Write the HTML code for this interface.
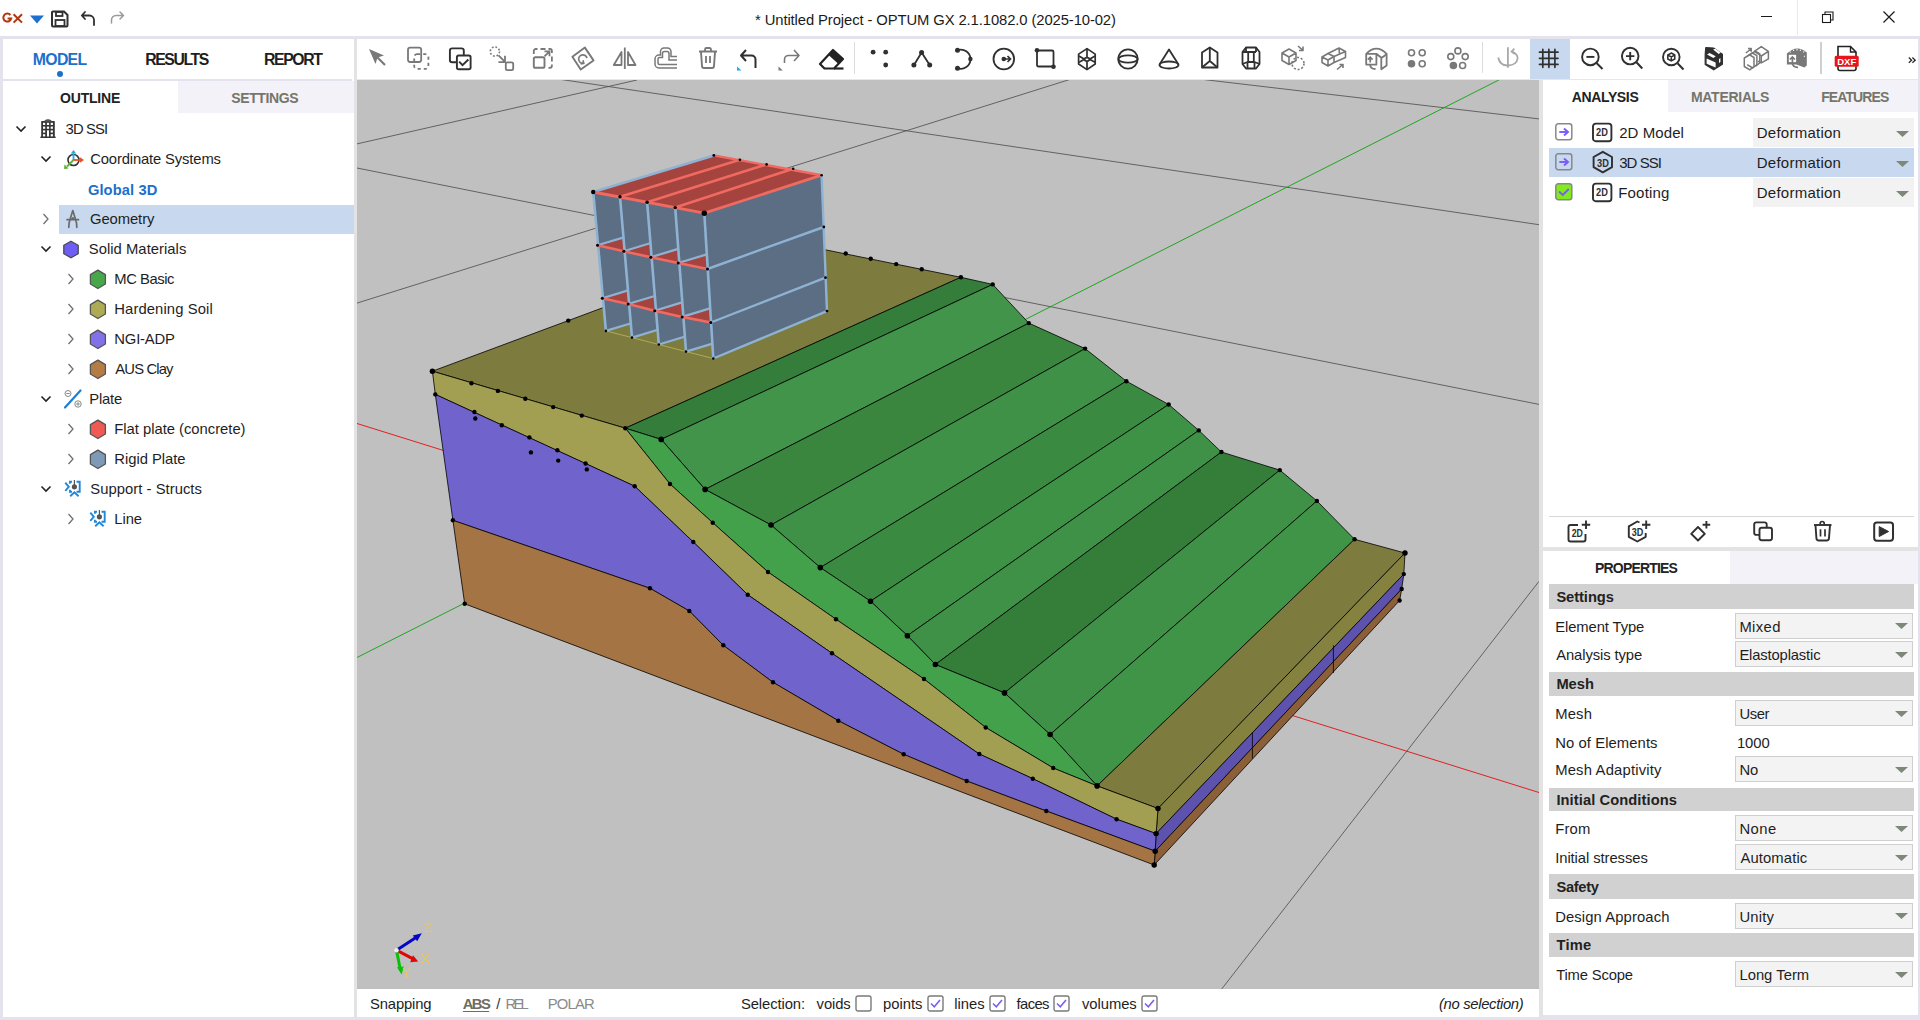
<!DOCTYPE html>
<html><head><meta charset="utf-8"><title>OPTUM GX</title>
<style>
html,body{margin:0;padding:0;width:1920px;height:1020px;overflow:hidden;background:#fff;}
body{position:relative;font-family:"Liberation Sans", sans-serif;}
.t{position:absolute;white-space:pre;line-height:1.117;}
.r{position:absolute;box-sizing:border-box;}
svg.r{overflow:visible;}
#vp{position:absolute;left:0;top:0;}
</style></head><body>
<svg id="vp" width="1920" height="1020" viewBox="0 0 1920 1020">
<defs><clipPath id="vc"><rect x="357" y="80" width="1182" height="910"/></clipPath></defs>
<g clip-path="url(#vc)">
<rect x="357" y="80" width="1182" height="909" fill="#c0c0c0"/>
<line x1="357.0" y1="143.9" x2="637.0" y2="80.0" stroke="#4a4a4a" stroke-width="0.8" />
<line x1="561.8" y1="79.6" x2="1539.0" y2="224.7" stroke="#4a4a4a" stroke-width="0.8" />
<line x1="357.0" y1="168.0" x2="1539.0" y2="404.4" stroke="#4a4a4a" stroke-width="0.8" />
<line x1="357.0" y1="303.1" x2="1069.1" y2="79.7" stroke="#4a4a4a" stroke-width="0.8" />
<line x1="1204.9" y1="79.7" x2="1539.0" y2="118.9" stroke="#4a4a4a" stroke-width="0.8" />
<line x1="1221.7" y1="989.0" x2="1539.0" y2="581.3" stroke="#4a4a4a" stroke-width="0.8" />
<line x1="357.0" y1="423.5" x2="1539.0" y2="792.5" stroke="#e01010" stroke-width="0.9" />
<line x1="357.0" y1="657.5" x2="1499.4" y2="79.7" stroke="#10a010" stroke-width="0.9" />
<polygon points="432.4,371.2 625.3,428.2 960.9,277.3 782.0,241.0" fill="#7d7b3d" stroke="#000" stroke-width="0.8" stroke-linejoin="round" />
<polygon points="625.3,428.2 960.9,277.3 992.7,284.4 661.2,439.4" fill="#347d3a" stroke="#000" stroke-width="0.8" stroke-linejoin="round" />
<polygon points="661.2,439.4 992.7,284.4 1028.8,323.1 705.1,489.4" fill="#41944a" stroke="#000" stroke-width="0.8" stroke-linejoin="round" />
<polygon points="705.1,489.4 1028.8,323.1 1085.1,348.6 771.0,525.0" fill="#3a863f" stroke="#000" stroke-width="0.8" stroke-linejoin="round" />
<polygon points="771.0,525.0 1085.1,348.6 1126.4,381.2 820.3,567.6" fill="#3e9146" stroke="#000" stroke-width="0.8" stroke-linejoin="round" />
<polygon points="820.3,567.6 1126.4,381.2 1168.7,404.5 870.5,601.2" fill="#3b8a41" stroke="#000" stroke-width="0.8" stroke-linejoin="round" />
<polygon points="870.5,601.2 1168.7,404.5 1198.8,430.4 907.4,635.7" fill="#3e9246" stroke="#000" stroke-width="0.8" stroke-linejoin="round" />
<polygon points="907.4,635.7 1198.8,430.4 1221.4,452.0 935.4,664.5" fill="#3e9146" stroke="#000" stroke-width="0.8" stroke-linejoin="round" />
<polygon points="935.4,664.5 1221.4,452.0 1279.8,470.1 1004.5,692.9" fill="#357e3a" stroke="#000" stroke-width="0.8" stroke-linejoin="round" />
<polygon points="1004.5,692.9 1279.8,470.1 1316.9,500.9 1050.1,734.5" fill="#3e9146" stroke="#000" stroke-width="0.8" stroke-linejoin="round" />
<polygon points="1050.1,734.5 1316.9,500.9 1354.6,539.3 1097.1,785.9" fill="#3f9447" stroke="#000" stroke-width="0.8" stroke-linejoin="round" />
<polygon points="625.3,428.2 661.2,439.4 705.1,489.4 771.0,525.0 820.3,567.6 870.5,601.2 907.4,635.7 935.4,664.5 1004.5,692.9 1050.1,734.5 1097.1,785.9 1053.2,768.0 985.7,727.5 924.0,679.0 836.0,619.3 768.0,572.0 712.7,522.7 670.0,484.0" fill="#43a04b" stroke="#000" stroke-width="0.8" stroke-linejoin="round" />
<polygon points="1097.1,785.9 1354.6,539.3 1405.0,553.0 1158.0,808.5" fill="#7d7b3d" stroke="#000" stroke-width="0.8" stroke-linejoin="round" />
<polygon points="1158.0,808.5 1405.0,553.0 1403.8,574.1 1156.1,833.6" fill="#858240" stroke="#000" stroke-width="0.8" stroke-linejoin="round" />
<polygon points="1156.1,833.6 1403.8,574.1 1401.7,589.0 1155.2,851.2" fill="#5d52ae" stroke="#000" stroke-width="0.8" stroke-linejoin="round" />
<polygon points="1155.2,851.2 1401.7,589.0 1399.6,600.5 1154.2,865.0" fill="#8b5f38" stroke="#000" stroke-width="0.8" stroke-linejoin="round" />
<polygon points="432.4,371.2 625.3,428.2 670.0,484.0 712.7,522.7 768.0,572.0 836.0,619.3 924.0,679.0 985.7,727.5 1053.2,768.0 1097.1,785.9 1158.0,808.5 1156.1,833.6 1116.6,819.2 1032.8,778.7 979.3,754.0 832.0,653.3 747.7,594.7 693.3,542.0 634.7,486.2 435.3,394.4" fill="#a39f52" stroke="#000" stroke-width="0.8" stroke-linejoin="round" />
<polygon points="435.3,394.4 634.7,486.2 693.3,542.0 747.7,594.7 832.0,653.3 979.3,754.0 1032.8,778.7 1116.6,819.2 1156.1,833.6 1155.2,851.2 1046.3,811.0 966.7,781.0 903.7,754.3 838.3,720.7 773.0,682.3 723.3,645.3 689.3,611.0 650.0,588.3 452.9,520.3" fill="#7064cc" stroke="#000" stroke-width="0.8" stroke-linejoin="round" />
<polygon points="452.9,520.3 650.0,588.3 689.3,611.0 723.3,645.3 773.0,682.3 838.3,720.7 903.7,754.3 966.7,781.0 1046.3,811.0 1155.2,851.2 1154.2,865.0 464.7,603.8" fill="#a47445" stroke="#000" stroke-width="0.8" stroke-linejoin="round" />
<line x1="1252.4" y1="732.8" x2="1252.4" y2="758.4" stroke="#000" stroke-width="0.8" />
<line x1="1333.4" y1="645.3" x2="1333.4" y2="673.0" stroke="#000" stroke-width="0.8" />
<circle cx="432.4" cy="371.2" r="2.2" fill="#000"/>
<circle cx="471.5" cy="383.2" r="2.2" fill="#000"/>
<circle cx="497.9" cy="390.9" r="2.2" fill="#000"/>
<circle cx="525.3" cy="398.8" r="2.2" fill="#000"/>
<circle cx="553.2" cy="407.1" r="2.2" fill="#000"/>
<circle cx="581.8" cy="415.6" r="2.2" fill="#000"/>
<circle cx="625.3" cy="428.2" r="2.2" fill="#000"/>
<circle cx="435.3" cy="394.4" r="2.2" fill="#000"/>
<circle cx="474.4" cy="412.0" r="2.2" fill="#000"/>
<circle cx="475.3" cy="418.5" r="2.2" fill="#000"/>
<circle cx="501.8" cy="425.3" r="2.2" fill="#000"/>
<circle cx="529.4" cy="437.4" r="2.2" fill="#000"/>
<circle cx="530.9" cy="452.4" r="2.2" fill="#000"/>
<circle cx="557.4" cy="450.3" r="2.2" fill="#000"/>
<circle cx="558.2" cy="460.6" r="2.2" fill="#000"/>
<circle cx="585.6" cy="463.5" r="2.2" fill="#000"/>
<circle cx="586.8" cy="469.4" r="2.2" fill="#000"/>
<circle cx="568.3" cy="320.6" r="2.2" fill="#000"/>
<circle cx="845.7" cy="253.5" r="2.2" fill="#000"/>
<circle cx="870.7" cy="258.7" r="2.2" fill="#000"/>
<circle cx="896.2" cy="264.1" r="2.2" fill="#000"/>
<circle cx="921.7" cy="269.2" r="2.2" fill="#000"/>
<circle cx="670.0" cy="484.0" r="2.2" fill="#000"/>
<circle cx="712.7" cy="522.7" r="2.2" fill="#000"/>
<circle cx="768.0" cy="572.0" r="2.2" fill="#000"/>
<circle cx="836.0" cy="619.3" r="2.2" fill="#000"/>
<circle cx="924.0" cy="679.0" r="2.2" fill="#000"/>
<circle cx="985.7" cy="727.5" r="2.2" fill="#000"/>
<circle cx="1053.2" cy="768.0" r="2.2" fill="#000"/>
<circle cx="1097.1" cy="785.9" r="2.2" fill="#000"/>
<circle cx="634.7" cy="486.2" r="2.2" fill="#000"/>
<circle cx="693.3" cy="542.0" r="2.2" fill="#000"/>
<circle cx="747.7" cy="594.7" r="2.2" fill="#000"/>
<circle cx="832.0" cy="653.3" r="2.2" fill="#000"/>
<circle cx="979.3" cy="754.0" r="2.2" fill="#000"/>
<circle cx="1032.8" cy="778.7" r="2.2" fill="#000"/>
<circle cx="1116.6" cy="819.2" r="2.2" fill="#000"/>
<circle cx="1156.1" cy="833.6" r="2.2" fill="#000"/>
<circle cx="452.9" cy="520.3" r="2.2" fill="#000"/>
<circle cx="650.0" cy="588.3" r="2.2" fill="#000"/>
<circle cx="689.3" cy="611.0" r="2.2" fill="#000"/>
<circle cx="723.3" cy="645.3" r="2.2" fill="#000"/>
<circle cx="773.0" cy="682.3" r="2.2" fill="#000"/>
<circle cx="838.3" cy="720.7" r="2.2" fill="#000"/>
<circle cx="903.7" cy="754.3" r="2.2" fill="#000"/>
<circle cx="966.7" cy="781.0" r="2.2" fill="#000"/>
<circle cx="1046.3" cy="811.0" r="2.2" fill="#000"/>
<circle cx="1155.2" cy="851.2" r="2.2" fill="#000"/>
<circle cx="464.7" cy="603.8" r="2.2" fill="#000"/>
<circle cx="1154.2" cy="865.0" r="2.2" fill="#000"/>
<circle cx="960.9" cy="277.3" r="2.2" fill="#000"/>
<circle cx="992.7" cy="284.4" r="2.2" fill="#000"/>
<circle cx="1028.8" cy="323.1" r="2.2" fill="#000"/>
<circle cx="1085.1" cy="348.6" r="2.2" fill="#000"/>
<circle cx="1126.4" cy="381.2" r="2.2" fill="#000"/>
<circle cx="1168.7" cy="404.5" r="2.2" fill="#000"/>
<circle cx="1198.8" cy="430.4" r="2.2" fill="#000"/>
<circle cx="1221.4" cy="452.0" r="2.2" fill="#000"/>
<circle cx="1279.8" cy="470.1" r="2.2" fill="#000"/>
<circle cx="1316.9" cy="500.9" r="2.2" fill="#000"/>
<circle cx="1354.6" cy="539.3" r="2.2" fill="#000"/>
<circle cx="1405.0" cy="553.0" r="2.2" fill="#000"/>
<circle cx="1403.8" cy="574.1" r="2.2" fill="#000"/>
<circle cx="1401.7" cy="589.0" r="2.2" fill="#000"/>
<circle cx="1399.6" cy="600.5" r="2.2" fill="#000"/>
<circle cx="1158.0" cy="808.5" r="2.2" fill="#000"/>
<circle cx="661.2" cy="439.4" r="2.8" fill="#000"/>
<circle cx="705.1" cy="489.4" r="2.8" fill="#000"/>
<circle cx="771.0" cy="525.0" r="2.8" fill="#000"/>
<circle cx="820.3" cy="567.6" r="2.8" fill="#000"/>
<circle cx="870.5" cy="601.2" r="2.8" fill="#000"/>
<circle cx="907.4" cy="635.7" r="2.8" fill="#000"/>
<circle cx="935.4" cy="664.5" r="2.8" fill="#000"/>
<circle cx="1004.5" cy="692.9" r="2.8" fill="#000"/>
<circle cx="1050.1" cy="734.5" r="2.8" fill="#000"/>
<circle cx="1097.1" cy="785.9" r="2.8" fill="#000"/>
<circle cx="1158.0" cy="808.5" r="2.7" fill="#000"/>
<circle cx="1156.1" cy="833.6" r="2.7" fill="#000"/>
<circle cx="1155.2" cy="851.2" r="2.7" fill="#000"/>
<circle cx="1154.2" cy="865.0" r="2.7" fill="#000"/>
<circle cx="432.4" cy="371.2" r="2.7" fill="#000"/>
<circle cx="1405.0" cy="553.0" r="2.7" fill="#000"/>
<polygon points="593.2,192.0 704.3,213.2 821.6,175.2 827.0,311.1 713.3,358.5 605.9,330.9" fill="#5b6e84" stroke="none" stroke-width="0" stroke-linejoin="round" />
<polygon points="605.9,330.9 631.2,323.2 632.0,337.6" fill="#7d7b3d" stroke="none" stroke-width="0" stroke-linejoin="round" />
<line x1="605.9" y1="330.9" x2="631.2" y2="323.2" stroke="#8fb2d3" stroke-width="2.2" />
<polygon points="597.5,245.3 623.0,237.6 623.8,251.3" fill="#a5443e" stroke="none" stroke-width="0" stroke-linejoin="round" />
<line x1="597.5" y1="245.3" x2="623.0" y2="237.6" stroke="#8fb2d3" stroke-width="2.2" />
<polygon points="602.3,298.2 627.3,290.6 628.1,304.0" fill="#a5443e" stroke="none" stroke-width="0" stroke-linejoin="round" />
<line x1="602.3" y1="298.2" x2="627.3" y2="290.6" stroke="#8fb2d3" stroke-width="2.2" />
<polygon points="632.0,337.6 658.0,329.7 658.8,344.5" fill="#7d7b3d" stroke="none" stroke-width="0" stroke-linejoin="round" />
<line x1="632.0" y1="337.6" x2="658.0" y2="329.7" stroke="#8fb2d3" stroke-width="2.2" />
<polygon points="623.8,251.3 650.0,243.3 650.8,257.2" fill="#a5443e" stroke="none" stroke-width="0" stroke-linejoin="round" />
<line x1="623.8" y1="251.3" x2="650.0" y2="243.3" stroke="#8fb2d3" stroke-width="2.2" />
<polygon points="628.1,304.0 653.9,296.2 654.7,310.7" fill="#a5443e" stroke="none" stroke-width="0" stroke-linejoin="round" />
<line x1="628.1" y1="304.0" x2="653.9" y2="296.2" stroke="#8fb2d3" stroke-width="2.2" />
<polygon points="658.8,344.5 685.2,336.5 686.0,351.6" fill="#7d7b3d" stroke="none" stroke-width="0" stroke-linejoin="round" />
<line x1="658.8" y1="344.5" x2="685.2" y2="336.5" stroke="#8fb2d3" stroke-width="2.2" />
<polygon points="650.8,257.2 677.4,249.1 678.2,263.0" fill="#a5443e" stroke="none" stroke-width="0" stroke-linejoin="round" />
<line x1="650.8" y1="257.2" x2="677.4" y2="249.1" stroke="#8fb2d3" stroke-width="2.2" />
<polygon points="654.7,310.7 681.3,302.6 682.1,316.9" fill="#a5443e" stroke="none" stroke-width="0" stroke-linejoin="round" />
<line x1="654.7" y1="310.7" x2="681.3" y2="302.6" stroke="#8fb2d3" stroke-width="2.2" />
<polygon points="686.0,351.6 712.5,343.6 713.3,358.5" fill="#7d7b3d" stroke="none" stroke-width="0" stroke-linejoin="round" />
<line x1="686.0" y1="351.6" x2="712.5" y2="343.6" stroke="#8fb2d3" stroke-width="2.2" />
<polygon points="678.2,263.0 706.7,254.4 707.5,269.0" fill="#a5443e" stroke="none" stroke-width="0" stroke-linejoin="round" />
<line x1="678.2" y1="263.0" x2="706.7" y2="254.4" stroke="#8fb2d3" stroke-width="2.2" />
<polygon points="682.1,316.9 710.0,308.4 710.8,322.5" fill="#a5443e" stroke="none" stroke-width="0" stroke-linejoin="round" />
<line x1="682.1" y1="316.9" x2="710.0" y2="308.4" stroke="#8fb2d3" stroke-width="2.2" />
<line x1="605.9" y1="330.9" x2="632.0" y2="337.6" stroke="#c9c25a" stroke-width="0.7" />
<line x1="632.0" y1="337.6" x2="658.8" y2="344.5" stroke="#c9c25a" stroke-width="0.7" />
<line x1="658.8" y1="344.5" x2="686.0" y2="351.6" stroke="#c9c25a" stroke-width="0.7" />
<line x1="686.0" y1="351.6" x2="713.3" y2="358.5" stroke="#c9c25a" stroke-width="0.7" />
<polygon points="593.2,192.0 713.8,155.4 821.6,175.2 704.3,213.2" fill="#a5443e" stroke="none" stroke-width="0" stroke-linejoin="round" />
<line x1="620.0" y1="196.8" x2="739.9" y2="159.7" stroke="#f06a62" stroke-width="2.6" />
<line x1="647.1" y1="202.2" x2="766.6" y2="164.4" stroke="#f06a62" stroke-width="2.6" />
<line x1="675.2" y1="207.6" x2="793.2" y2="168.7" stroke="#f06a62" stroke-width="2.6" />
<line x1="593.2" y1="192.0" x2="713.8" y2="155.4" stroke="#8fb2d3" stroke-width="2.6" />
<line x1="713.8" y1="155.4" x2="821.6" y2="175.2" stroke="#f06a62" stroke-width="2.4" />
<line x1="821.6" y1="175.2" x2="704.3" y2="213.2" stroke="#f06a62" stroke-width="2.8" />
<line x1="707.5" y1="269.0" x2="823.8" y2="227.0" stroke="#8fb2d3" stroke-width="2.4" />
<line x1="710.8" y1="322.5" x2="825.5" y2="277.7" stroke="#8fb2d3" stroke-width="2.4" />
<line x1="713.3" y1="358.5" x2="827.0" y2="311.1" stroke="#8fb2d3" stroke-width="2.4" />
<line x1="821.6" y1="175.2" x2="827.0" y2="311.1" stroke="#8fb2d3" stroke-width="2.4" />
<line x1="593.2" y1="192.0" x2="605.9" y2="330.9" stroke="#8fb2d3" stroke-width="2.6" />
<line x1="620.0" y1="196.8" x2="632.0" y2="337.6" stroke="#8fb2d3" stroke-width="2.6" />
<line x1="647.1" y1="202.2" x2="658.8" y2="344.5" stroke="#8fb2d3" stroke-width="2.6" />
<line x1="675.2" y1="207.6" x2="686.0" y2="351.6" stroke="#8fb2d3" stroke-width="2.6" />
<line x1="704.3" y1="213.2" x2="713.3" y2="358.5" stroke="#8fb2d3" stroke-width="2.6" />
<line x1="597.5" y1="245.3" x2="623.8" y2="251.3" stroke="#f06a62" stroke-width="2.6" />
<line x1="623.8" y1="251.3" x2="650.8" y2="257.2" stroke="#f06a62" stroke-width="2.6" />
<line x1="650.8" y1="257.2" x2="678.2" y2="263.0" stroke="#f06a62" stroke-width="2.6" />
<line x1="678.2" y1="263.0" x2="707.5" y2="269.0" stroke="#f06a62" stroke-width="2.6" />
<line x1="602.3" y1="298.2" x2="628.1" y2="304.0" stroke="#f06a62" stroke-width="2.6" />
<line x1="628.1" y1="304.0" x2="654.7" y2="310.7" stroke="#f06a62" stroke-width="2.6" />
<line x1="654.7" y1="310.7" x2="682.1" y2="316.9" stroke="#f06a62" stroke-width="2.6" />
<line x1="682.1" y1="316.9" x2="710.8" y2="322.5" stroke="#f06a62" stroke-width="2.6" />
<line x1="593.2" y1="192.0" x2="704.3" y2="213.2" stroke="#f06a62" stroke-width="2.8" />
<circle cx="620.0" cy="196.8" r="1.7" fill="#000"/>
<circle cx="647.1" cy="202.2" r="1.7" fill="#000"/>
<circle cx="675.2" cy="207.6" r="1.7" fill="#000"/>
<circle cx="739.9" cy="159.7" r="1.3" fill="#000"/>
<circle cx="766.6" cy="164.4" r="1.3" fill="#000"/>
<circle cx="793.2" cy="168.7" r="1.3" fill="#000"/>
<circle cx="821.6" cy="175.2" r="1.3" fill="#000"/>
<circle cx="713.8" cy="155.4" r="1.4" fill="#000"/>
<circle cx="827.0" cy="311.1" r="1.4" fill="#000"/>
<circle cx="823.8" cy="227.0" r="1.4" fill="#000"/>
<circle cx="825.5" cy="277.7" r="1.4" fill="#000"/>
<circle cx="605.9" cy="330.9" r="1.3" fill="#000"/>
<circle cx="632.0" cy="337.6" r="1.3" fill="#000"/>
<circle cx="658.8" cy="344.5" r="1.3" fill="#000"/>
<circle cx="686.0" cy="351.6" r="1.3" fill="#000"/>
<circle cx="713.3" cy="358.5" r="1.3" fill="#000"/>
<circle cx="597.5" cy="245.3" r="1.5" fill="#000"/>
<circle cx="623.8" cy="251.3" r="1.5" fill="#000"/>
<circle cx="650.8" cy="257.2" r="1.5" fill="#000"/>
<circle cx="678.2" cy="263.0" r="1.5" fill="#000"/>
<circle cx="707.5" cy="269.0" r="1.5" fill="#000"/>
<circle cx="602.3" cy="298.2" r="1.5" fill="#000"/>
<circle cx="628.1" cy="304.0" r="1.5" fill="#000"/>
<circle cx="654.7" cy="310.7" r="1.5" fill="#000"/>
<circle cx="682.1" cy="316.9" r="1.5" fill="#000"/>
<circle cx="710.8" cy="322.5" r="1.5" fill="#000"/>
<circle cx="704.3" cy="213.2" r="2.7" fill="#000"/>
<circle cx="593.2" cy="192.0" r="2.2" fill="#000"/>
<line x1="396.5" y1="950.2" x2="417.5" y2="936.5" stroke="#0606c4" stroke-width="3.0" />
<polygon points="421.8,933.2 412.8,935.5 417.2,941.2" fill="#0606c4"/>
<line x1="396.5" y1="950.2" x2="413.5" y2="959.2" stroke="#e00606" stroke-width="3.0" />
<polygon points="418.2,961.6 410.2,962.2 413,955.2" fill="#e00606"/>
<line x1="396.5" y1="950.2" x2="400.5" y2="970.5" stroke="#08c008" stroke-width="3.0" />
<polygon points="401.6,974.6 397,967.2 403.8,966.6" fill="#08c008"/>
<circle cx="396.5" cy="950.2" r="2.2" fill="#eeeeee"/>
<g fill="none" stroke="#f0c848" stroke-width="0.9"><path d="M424.9,923.6 H431 L424.8,931.6 H431.2 M424.9,923.2 V925.2 M431.2,929.8 V932"/><path d="M421.8,954.6 L428.2,962.6 M428.2,954.6 L421.8,962.6 M420.8,954.6 H423.2 M427,954.6 H429.3 M420.8,962.6 H423.2 M427,962.6 H429.3"/><path d="M403.6,968.3 L406.4,972 L409.2,968.3 M406.4,972 V976.3 M405,976.3 H407.8 M402.8,968.3 H404.6 M408.3,968.3 H410"/></g>
</g></svg>
<div class="r" style="left:0px;top:0px;width:1920px;height:36px;background:#fff;"></div>
<div class="r" style="left:0px;top:36px;width:1920px;height:3px;background:#e3e2ed;"></div>
<div class="r" style="left:0px;top:39px;width:3px;height:981px;background:#e3e2ed;"></div>
<div class="r" style="left:1918px;top:39px;width:2px;height:981px;background:#e3e2ed;"></div>
<div class="r" style="left:0px;top:1017px;width:1920px;height:3px;background:#e3e2ed;"></div>
<div class="r" style="left:3px;top:39px;width:351px;height:978px;background:#fff;"></div>
<div class="r" style="left:354px;top:39px;width:3px;height:978px;background:#e3e3e3;"></div>
<div class="r" style="left:357px;top:39px;width:1561px;height:41px;background:#fff;"></div>
<div class="r" style="left:1539px;top:80px;width:4px;height:937px;background:#e3e3e3;"></div>
<div class="r" style="left:357px;top:79px;width:1561px;height:1px;background:#e7e6ef;"></div>
<div class="r" style="left:1543px;top:80px;width:375px;height:935px;background:#fff;"></div>
<div class="r" style="left:1543px;top:1015px;width:375px;height:2px;background:#e3e2ed;"></div>
<div class="r" style="left:357px;top:990px;width:1182px;height:27px;background:#fff;"></div>
<svg class="r" style="left:0px;top:8px;" width="26" height="20" viewBox="0 0 26 20"><g fill="none" stroke="#b3360f" stroke-width="2"><path d="M10.4,7 A4,4 0 1 0 11.2,10.6 H7.6"/><path d="M13.6,6.2 L22,14.6 M22,6.2 L13.6,14.6"/></g></svg>
<svg class="r" style="left:28px;top:14px;" width="18" height="11" viewBox="0 0 18 11"><path d="M2,1.5 L16,1.5 L9,9.5 Z" fill="#1f6fd0"/></svg>
<svg class="r" style="left:50px;top:9px;" width="20" height="19" viewBox="0 0 20 19"><path d="M3,2.5 h11 l3.5,3.5 v10.5 a1,1 0 0 1 -1,1 h-13.5 a1,1 0 0 1 -1,-1 v-13 a1,1 0 0 1 1,-1z" fill="none" stroke="#303030" stroke-width="2"/><rect x="6" y="3" width="6.5" height="4" fill="none" stroke="#303030" stroke-width="1.8"/><rect x="5.5" y="11" width="9" height="6" fill="none" stroke="#303030" stroke-width="1.8"/></svg>
<svg class="r" style="left:80px;top:9px;" width="18" height="18" viewBox="0 0 18 18"><path d="M5,3 L1.8,6.5 L5,10 M2.5,6.5 H9.5 a4.5,4.5 0 0 1 4.5,4.5 V16" fill="none" stroke="#303030" stroke-width="1.8" stroke-linecap="round" stroke-linejoin="round"/></svg>
<svg class="r" style="left:108px;top:9px;" width="18" height="18" viewBox="0 0 18 18"><path d="M12,3 L15.5,6.5 L12,10 M15,6.5 H8 a4.5,4.5 0 0 0 -4.5,4.5 V14" fill="none" stroke="#9a9a9a" stroke-width="1.5" stroke-linecap="round" stroke-linejoin="round"/></svg>
<div class="t" style="left:755.00px;top:11.91px;font-size:14.8px;font-weight:400;color:#1a1a1a;letter-spacing:-0.097px;">* Untitled Project - OPTUM GX 2.1.1082.0 (2025-10-02)</div>
<div class="r" style="left:1761px;top:16px;width:11px;height:1px;background:#1a1a1a;"></div>
<svg class="r" style="left:1820px;top:9px;" width="16" height="16" viewBox="0 0 16 16"><rect x="2.5" y="5.5" width="8" height="8" fill="none" stroke="#1a1a1a" stroke-width="1.1"/><path d="M5,5.5 V3 H13 V11 H10.5" fill="none" stroke="#1a1a1a" stroke-width="1.1"/></svg>
<svg class="r" style="left:1882px;top:10px;" width="14" height="14" viewBox="0 0 14 14"><path d="M1.5,1.5 L12.5,12.5 M12.5,1.5 L1.5,12.5" stroke="#1a1a1a" stroke-width="1.2"/></svg>
<div class="r" style="left:1797px;top:0px;width:1px;height:35px;background:#e6e8f2;"></div>
<div class="t" style="left:32.75px;top:50.70px;font-size:15.8px;font-weight:700;color:#1c6fcb;letter-spacing:-0.660px;">MODEL</div>
<div class="t" style="left:145.25px;top:50.70px;font-size:15.8px;font-weight:700;color:#1e1e1e;letter-spacing:-1.419px;">RESULTS</div>
<div class="t" style="left:264.00px;top:50.70px;font-size:15.8px;font-weight:700;color:#1e1e1e;letter-spacing:-1.385px;">REPORT</div>
<div class="r" style="left:57px;top:70.5px;width:6px;height:6px;border-radius:3px;background:#1c6fcb"></div>
<div class="r" style="left:3px;top:78.5px;width:349px;height:2.2px;background:#e3e2ed;"></div>
<div class="r" style="left:178px;top:80.7px;width:176px;height:32.8px;background:#f3f2f8;"></div>
<div class="t" style="left:60.00px;top:91.33px;font-size:14px;font-weight:700;color:#222;letter-spacing:-0.184px;">OUTLINE</div>
<div class="t" style="left:231.25px;top:91.33px;font-size:14px;font-weight:700;color:#75756a;letter-spacing:-0.381px;">SETTINGS</div>
<div class="r" style="left:59px;top:205px;width:295px;height:28.5px;background:#c8d8ee;"></div>
<svg class="r" style="left:15px;top:125px;" width="12" height="8" viewBox="0 0 12 8"><path d="M1.5,1.5 L6,6 L10.5,1.5" fill="none" stroke="#222" stroke-width="1.6"/></svg>
<svg class="r" style="left:39px;top:119px;" width="18" height="20" viewBox="0 0 18 20"><path d="M2.2,18.6 V2.6 Q2.2,2 2.8,2 H5.2 Q6.2,0.3 9,0.3 Q11.8,0.3 12.8,2 H15.2 Q15.8,2 15.8,2.6 V18.6 Z" fill="#363636"/><rect x="1.3" y="17.4" width="15.4" height="1.6" rx="0.5" fill="#363636"/><g fill="#fff"><rect x="4" y="3.8" width="2.2" height="2.2"/><rect x="7.9" y="3.8" width="2.2" height="2.2"/><rect x="11.7" y="3.8" width="2.2" height="2.2"/><rect x="4" y="7.6" width="2.2" height="2.2"/><rect x="7.9" y="7.6" width="2.2" height="2.2"/><rect x="11.7" y="7.6" width="2.2" height="2.2"/><rect x="4" y="11.4" width="2.2" height="2.2"/><rect x="11.7" y="11.4" width="2.2" height="2.2"/><rect x="4" y="15.2" width="2.2" height="2.2"/><rect x="11.7" y="15.2" width="2.2" height="2.2"/><rect x="8" y="11.3" width="2" height="6.2"/></g><rect x="6" y="1.5" width="6" height="0.8" fill="#777"/></svg>
<div class="t" style="left:65.50px;top:121.21px;font-size:14.8px;font-weight:400;color:#1e1e1e;letter-spacing:-0.853px;">3D SSI</div>
<svg class="r" style="left:40px;top:155px;" width="12" height="8" viewBox="0 0 12 8"><path d="M1.5,1.5 L6,6 L10.5,1.5" fill="none" stroke="#222" stroke-width="1.6"/></svg>
<svg class="r" style="left:63px;top:149px;" width="22" height="21" viewBox="0 0 22 21"><circle cx="10.5" cy="11" r="5.5" fill="none" stroke="#333" stroke-width="1.6"/><path d="M10.5,11 V2.5" stroke="#2aa7e8" stroke-width="1.8"/><path d="M7.8,4.5 L10.5,1 L13.2,4.5z" fill="#2aa7e8"/><path d="M10.5,11 H18" stroke="#e8502a" stroke-width="1.8"/><path d="M17,8.3 L21,11 L17,13.7z" fill="#e8502a"/><path d="M10.5,11 L4,17.5" stroke="#5ab030" stroke-width="1.8"/><path d="M1.5,15.5 L1,20 L5.5,19.5z" fill="#5ab030"/></svg>
<div class="t" style="left:90.20px;top:151.21px;font-size:14.8px;font-weight:400;color:#1e1e1e;letter-spacing:-0.143px;">Coordinate Systems</div>
<div class="t" style="left:87.90px;top:181.50px;font-size:14.7px;font-weight:700;color:#1c6fcb;letter-spacing:0.107px;">Global 3D</div>
<svg class="r" style="left:42px;top:213px;" width="8" height="12" viewBox="0 0 8 12"><path d="M1.5,1 L6,6 L1.5,11" fill="none" stroke="#707070" stroke-width="1.3"/></svg>
<svg class="r" style="left:65px;top:209px;" width="16" height="21" viewBox="0 0 16 21"><g fill="none" stroke="#6a6a6a" stroke-width="1.7" stroke-linecap="round"><path d="M7.8,1.5 L5.2,10 Q3.8,13.5 3.8,18.3 M7.8,1.5 L10.4,10 Q11.8,13.5 11.8,18.3"/><path d="M2.1,10.7 H13.5"/></g><circle cx="7.8" cy="9.4" r="1.5" fill="#6a6a6a"/></svg>
<div class="t" style="left:90.00px;top:211.21px;font-size:14.8px;font-weight:400;color:#1e1e1e;letter-spacing:-0.080px;">Geometry</div>
<svg class="r" style="left:40px;top:245px;" width="12" height="8" viewBox="0 0 12 8"><path d="M1.5,1.5 L6,6 L10.5,1.5" fill="none" stroke="#222" stroke-width="1.6"/></svg>
<svg class="r" style="left:62px;top:240px;" width="18" height="19" viewBox="0 0 18 19"><polygon points="9,1.2 16.2,5.3 16.2,13.7 9,17.8 1.8,13.7 1.8,5.3" fill="#6f5ef5" stroke="#4a4a4a" stroke-width="1.3"/></svg>
<div class="t" style="left:88.80px;top:241.21px;font-size:14.8px;font-weight:400;color:#1e1e1e;letter-spacing:0.033px;">Solid Materials</div>
<svg class="r" style="left:67px;top:273px;" width="8" height="12" viewBox="0 0 8 12"><path d="M1.5,1 L6,6 L1.5,11" fill="none" stroke="#707070" stroke-width="1.3"/></svg>
<svg class="r" style="left:89px;top:268.7px;" width="18" height="21" viewBox="0 0 18 21"><polygon points="8.9,1.1 16.4,5.6 16.4,15 8.9,19.5 1.4,15 1.4,5.6" fill="#47a84b" stroke="#555" stroke-width="1.3" stroke-linejoin="round"/></svg>
<div class="t" style="left:114.30px;top:271.21px;font-size:14.8px;font-weight:400;color:#1e1e1e;letter-spacing:-0.458px;">MC Basic</div>
<svg class="r" style="left:67px;top:303px;" width="8" height="12" viewBox="0 0 8 12"><path d="M1.5,1 L6,6 L1.5,11" fill="none" stroke="#707070" stroke-width="1.3"/></svg>
<svg class="r" style="left:89px;top:298.7px;" width="18" height="21" viewBox="0 0 18 21"><polygon points="8.9,1.1 16.4,5.6 16.4,15 8.9,19.5 1.4,15 1.4,5.6" fill="#aeab55" stroke="#555" stroke-width="1.3" stroke-linejoin="round"/></svg>
<div class="t" style="left:114.30px;top:301.21px;font-size:14.8px;font-weight:400;color:#1e1e1e;letter-spacing:0.102px;">Hardening Soil</div>
<svg class="r" style="left:67px;top:333px;" width="8" height="12" viewBox="0 0 8 12"><path d="M1.5,1 L6,6 L1.5,11" fill="none" stroke="#707070" stroke-width="1.3"/></svg>
<svg class="r" style="left:89px;top:328.7px;" width="18" height="21" viewBox="0 0 18 21"><polygon points="8.9,1.1 16.4,5.6 16.4,15 8.9,19.5 1.4,15 1.4,5.6" fill="#8272ea" stroke="#555" stroke-width="1.3" stroke-linejoin="round"/></svg>
<div class="t" style="left:114.30px;top:331.21px;font-size:14.8px;font-weight:400;color:#1e1e1e;letter-spacing:-0.182px;">NGI-ADP</div>
<svg class="r" style="left:67px;top:363px;" width="8" height="12" viewBox="0 0 8 12"><path d="M1.5,1 L6,6 L1.5,11" fill="none" stroke="#707070" stroke-width="1.3"/></svg>
<svg class="r" style="left:89px;top:358.7px;" width="18" height="21" viewBox="0 0 18 21"><polygon points="8.9,1.1 16.4,5.6 16.4,15 8.9,19.5 1.4,15 1.4,5.6" fill="#b57c45" stroke="#555" stroke-width="1.3" stroke-linejoin="round"/></svg>
<div class="t" style="left:115.30px;top:361.21px;font-size:14.8px;font-weight:400;color:#1e1e1e;letter-spacing:-0.848px;">AUS Clay</div>
<svg class="r" style="left:40px;top:395px;" width="12" height="8" viewBox="0 0 12 8"><path d="M1.5,1.5 L6,6 L10.5,1.5" fill="none" stroke="#222" stroke-width="1.6"/></svg>
<svg class="r" style="left:63px;top:389px;" width="20" height="20" viewBox="0 0 20 20"><path d="M2,18.5 L17.5,1.5" stroke="#1e7fd6" stroke-width="2.2" stroke-linecap="round"/><circle cx="5" cy="4.5" r="3" fill="none" stroke="#888" stroke-width="1"/><path d="M3.3,4.5 h3.4" stroke="#888" stroke-width="1"/><circle cx="15" cy="15" r="3.2" fill="none" stroke="#888" stroke-width="1"/><path d="M13.2,15 h3.6 M15,13.2 v3.6" stroke="#888" stroke-width="1"/></svg>
<div class="t" style="left:89.30px;top:391.21px;font-size:14.8px;font-weight:400;color:#1e1e1e;letter-spacing:-0.199px;">Plate</div>
<svg class="r" style="left:67px;top:423px;" width="8" height="12" viewBox="0 0 8 12"><path d="M1.5,1 L6,6 L1.5,11" fill="none" stroke="#707070" stroke-width="1.3"/></svg>
<svg class="r" style="left:89px;top:418.7px;" width="18" height="21" viewBox="0 0 18 21"><polygon points="8.9,1.1 16.4,5.6 16.4,15 8.9,19.5 1.4,15 1.4,5.6" fill="#ef5a55" stroke="#555" stroke-width="1.3" stroke-linejoin="round"/></svg>
<div class="t" style="left:114.30px;top:421.21px;font-size:14.8px;font-weight:400;color:#1e1e1e;letter-spacing:-0.018px;">Flat plate (concrete)</div>
<svg class="r" style="left:67px;top:453px;" width="8" height="12" viewBox="0 0 8 12"><path d="M1.5,1 L6,6 L1.5,11" fill="none" stroke="#707070" stroke-width="1.3"/></svg>
<svg class="r" style="left:89px;top:448.7px;" width="18" height="21" viewBox="0 0 18 21"><polygon points="8.9,1.1 16.4,5.6 16.4,15 8.9,19.5 1.4,15 1.4,5.6" fill="#7f9ab6" stroke="#555" stroke-width="1.3" stroke-linejoin="round"/></svg>
<div class="t" style="left:114.30px;top:451.21px;font-size:14.8px;font-weight:400;color:#1e1e1e;letter-spacing:-0.033px;">Rigid Plate</div>
<svg class="r" style="left:40px;top:485px;" width="12" height="8" viewBox="0 0 12 8"><path d="M1.5,1.5 L6,6 L10.5,1.5" fill="none" stroke="#222" stroke-width="1.6"/></svg>
<svg class="r" style="left:63px;top:479px;" width="21" height="21" viewBox="0 0 21 21"><g stroke="#1e88dc" stroke-width="1.9" fill="none" stroke-linecap="butt"><path d="M2.3,3.6 L5.8,7.8 L2.3,11.8"/><path d="M9,2.8 H6.9 V4.8 M6.9,10.8 V12.8 H9 M13.5,2.8 H16.7 V12.8 H13.5"/><path d="M7.2,17.3 L11.4,13.4 L15.6,17.3"/></g><path d="M11.4,1 V6" stroke="#555" stroke-width="1.2"/><circle cx="11.4" cy="7.8" r="2.6" fill="#555"/></svg>
<div class="t" style="left:90.30px;top:481.21px;font-size:14.8px;font-weight:400;color:#1e1e1e;letter-spacing:0.036px;">Support - Structs</div>
<svg class="r" style="left:67px;top:513px;" width="8" height="12" viewBox="0 0 8 12"><path d="M1.5,1 L6,6 L1.5,11" fill="none" stroke="#707070" stroke-width="1.3"/></svg>
<svg class="r" style="left:88px;top:509px;" width="21" height="21" viewBox="0 0 21 21"><g stroke="#1e88dc" stroke-width="1.9" fill="none" stroke-linecap="butt"><path d="M2.3,3.6 L5.8,7.8 L2.3,11.8"/><path d="M9,2.8 H6.9 V4.8 M6.9,10.8 V12.8 H9 M13.5,2.8 H16.7 V12.8 H13.5"/><path d="M7.2,17.3 L11.4,13.4 L15.6,17.3"/></g><path d="M11.4,1 V6" stroke="#555" stroke-width="1.2"/><circle cx="11.4" cy="7.8" r="2.6" fill="#555"/></svg>
<div class="t" style="left:114.30px;top:511.21px;font-size:14.8px;font-weight:400;color:#1e1e1e;letter-spacing:-0.082px;">Line</div>
<svg class="r" style="left:366px;top:46px;" width="22" height="22" viewBox="0 0 22 22"><path d="M3,3 L18,9.5 L11.5,11.5 L9.5,18 Z" fill="#787878"/><path d="M11,11 L19,19" stroke="#787878" stroke-width="2.2"/></svg>
<svg class="r" style="left:404px;top:44px;" width="28" height="28" viewBox="0 0 28 28"><rect x="4" y="3.6" width="13.2" height="14.4" rx="2.2" fill="none" stroke="#787878" stroke-width="1.8"/><rect x="10.2" y="10.2" width="14.2" height="14.6" rx="2.8" fill="none" stroke="#787878" stroke-width="1.8" stroke-dasharray="3.2,3"/></svg>
<svg class="r" style="left:446px;top:45px;" width="28" height="28" viewBox="0 0 28 28"><rect x="3.9" y="3.4" width="13.9" height="13.8" rx="2.3" fill="none" stroke="#303030" stroke-width="1.9"/><rect x="10.9" y="10.5" width="13.7" height="13.7" rx="1.8" fill="#fff" stroke="#303030" stroke-width="1.9"/><path d="M13.2,16.7 L16.5,20.2 L22.4,14.5" fill="none" stroke="#303030" stroke-width="1.9"/></svg>
<svg class="r" style="left:488px;top:45px;" width="28" height="28" viewBox="0 0 28 28"><circle cx="6.9" cy="6.5" r="4.6" fill="none" stroke="#787878" stroke-width="1.6" stroke-dasharray="1.8,1.8"/><path d="M10.5,10.4 L17,16.8 M17,10.7 V17.2 H10.5" fill="none" stroke="#787878" stroke-width="1.8"/><rect x="17.8" y="17.4" width="7.4" height="7.8" rx="1.6" fill="none" stroke="#787878" stroke-width="1.8"/></svg>
<svg class="r" style="left:530px;top:46px;" width="26" height="26" viewBox="0 0 26 26"><rect x="3.8" y="11.2" width="10.7" height="10.6" rx="1.6" fill="none" stroke="#787878" stroke-width="1.9"/><path d="M3.8,8 V5 a2,2 0 0 1 2,-2 H7.5 M10.5,3 H15.5 M18.5,3 H19.9 a2,2 0 0 1 2,2 V7 M21.9,10.5 V15.5 M21.9,18.5 V19.8 a2,2 0 0 1 -2,2 H18.5" fill="none" stroke="#787878" stroke-width="1.8"/><path d="M14.5,10.3 L19.5,5.3 M14.5,5.3 H19.5 V10.3" fill="none" stroke="#787878" stroke-width="1.8"/></svg>
<svg class="r" style="left:570px;top:45px;" width="28" height="28" viewBox="0 0 28 28"><path d="M14.9,2.6 L23.5,15.4 L10.7,24.6 L2.4,11.8 Z" fill="none" stroke="#787878" stroke-width="1.9" stroke-linejoin="round"/><path d="M17,13.2 A4.2,4.2 0 1 0 13.2,18.2" fill="none" stroke="#787878" stroke-width="1.7"/><path d="M10.6,19 L13.8,18.4 L13,15.3" fill="none" stroke="#787878" stroke-width="1.6"/></svg>
<svg class="r" style="left:612px;top:46px;" width="26" height="25" viewBox="0 0 26 25"><path d="M12.8,1.5 V23" stroke="#787878" stroke-width="1.8"/><path d="M9.5,19 H1.8 L9.5,6 Z M16,19 H23.5 L16,6 Z" fill="none" stroke="#787878" stroke-width="1.8" stroke-linejoin="round"/></svg>
<svg class="r" style="left:653px;top:46px;" width="28" height="25" viewBox="0 0 28 25"><path d="M24,10.5 H18 V5.5 a3.5,3.5 0 0 0 -3.5,-3.5 H11 a3.5,3.5 0 0 0 -3.5,3.5 V9 H6 a4,4 0 0 0 -4,4 V18 a4,4 0 0 0 4,4 H24" fill="none" stroke="#787878" stroke-width="1.5"/><path d="M24,14 H16 V7.5 a2,2 0 0 0 -2,-2 H11.5 a2,2 0 0 0 -2,2 V11.5 H6.5 a1.5,1.5 0 0 0 -1.5,1.5 V17 a1.5,1.5 0 0 0 1.5,1.5 H24" fill="none" stroke="#787878" stroke-width="1.5"/></svg>
<svg class="r" style="left:697px;top:46px;" width="24" height="25" viewBox="0 0 24 25"><path d="M2,5.5 H20" stroke="#787878" stroke-width="2"/><path d="M8,5 V3.5 a1.5,1.5 0 0 1 1.5,-1.5 h3 a1.5,1.5 0 0 1 1.5,1.5 V5" fill="none" stroke="#787878" stroke-width="1.8"/><path d="M4,6 L5,20 a2,2 0 0 0 2,2 h8 a2,2 0 0 0 2,-2 L18,6" fill="none" stroke="#787878" stroke-width="1.9"/><path d="M9,10 V17 M13,10 V17" stroke="#787878" stroke-width="1.8"/></svg>
<svg class="r" style="left:736px;top:46px;" width="24" height="26" viewBox="0 0 24 26"><path d="M10,4 L5,9.5 L10,15 M5.5,9.5 H15.5 a4,4 0 0 1 4,4 V22" fill="none" stroke="#303030" stroke-width="2" stroke-linejoin="round"/><path d="M1,20.5 L5.5,24.5 H1 Z" fill="#20a8e8"/></svg>
<svg class="r" style="left:776px;top:46px;" width="26" height="26" viewBox="0 0 26 26"><path d="M18,4 L23,9.5 L18,15 M22.5,9.5 H12.5 a4,4 0 0 0 -4,4 V17" fill="none" stroke="#787878" stroke-width="1.6" stroke-linejoin="round"/><path d="M2.5,20.5 L6.8,24.5 H2.5 Z" fill="#777"/></svg>
<svg class="r" style="left:818px;top:46px;" width="28" height="26" viewBox="0 0 28 26"><path d="M2,18 L15,4 L25,13 L16,22.5 H6.5 Z" fill="none" stroke="#222" stroke-width="2.2" stroke-linejoin="round"/><path d="M15,4 L25,13 L20.5,18 L10.5,9 Z" fill="#222"/><path d="M16,22.5 H25.5" stroke="#222" stroke-width="2.2"/></svg>
<div class="r" style="left:854px;top:42px;width:1px;height:32px;background:#dcdcdc;"></div>
<svg class="r" style="left:866px;top:45px;" width="26" height="26" viewBox="0 0 26 26"><g fill="#303030"><circle cx="7.1" cy="7.2" r="2.4"/><circle cx="19.7" cy="7.2" r="2.4"/><circle cx="19.7" cy="20" r="2.4"/></g></svg>
<svg class="r" style="left:908px;top:45px;" width="26" height="26" viewBox="0 0 26 26"><path d="M6,20 L13.6,7.5 L21.7,20" fill="none" stroke="#303030" stroke-width="1.8"/><g fill="#303030"><circle cx="5.9" cy="20" r="2.5"/><circle cx="13.6" cy="7.5" r="2.5"/><circle cx="21.7" cy="20" r="2.5"/></g></svg>
<svg class="r" style="left:950px;top:45px;" width="26" height="26" viewBox="0 0 26 26"><path d="M7.5,5.2 A9.6,9.6 0 1 1 7.5,23.2" fill="none" stroke="#303030" stroke-width="1.8"/><g fill="#303030"><circle cx="7.5" cy="5.2" r="2.5"/><circle cx="20.4" cy="14" r="2.2"/><circle cx="7.5" cy="23.2" r="2.5"/></g></svg>
<svg class="r" style="left:991px;top:46px;" width="26" height="26" viewBox="0 0 26 26"><circle cx="12.8" cy="13" r="10.3" fill="none" stroke="#303030" stroke-width="1.8"/><circle cx="12.8" cy="13" r="2.3" fill="#303030"/><path d="M13,13 H19.5 M16.5,10 L19.5,13 L16.5,16" fill="none" stroke="#303030" stroke-width="1.7"/></svg>
<svg class="r" style="left:1033px;top:46px;" width="24" height="24" viewBox="0 0 24 24"><rect x="4" y="4.5" width="16.5" height="16" rx="1.5" fill="none" stroke="#303030" stroke-width="1.8"/><circle cx="4" cy="4.3" r="2.3" fill="#303030"/><circle cx="20.5" cy="20.8" r="2.3" fill="#303030"/></svg>
<svg class="r" style="left:1074px;top:46px;" width="26" height="26" viewBox="0 0 26 26"><g fill="none" stroke="#303030" stroke-width="1.7" stroke-linejoin="round"><path d="M13,2.6 L21.2,8.1 V18 L13,23.6 L4.6,18 V8.1 Z"/><path d="M13,2.6 V11.6 M13,15 V23.6 M5,10 L10.5,13.3 L5,16.2 M21,10 L15.5,13.3 L21,16.2"/><ellipse cx="13" cy="13.3" rx="2.5" ry="1.7"/></g></svg>
<svg class="r" style="left:1115px;top:46px;" width="26" height="26" viewBox="0 0 26 26"><g fill="none" stroke="#303030" stroke-width="1.8"><circle cx="13" cy="13" r="9.7"/><ellipse cx="13" cy="13" rx="9.5" ry="3.7"/></g></svg>
<svg class="r" style="left:1156px;top:45px;" width="26" height="26" viewBox="0 0 26 26"><g fill="none" stroke="#303030" stroke-width="1.8" stroke-linejoin="round"><path d="M3.5,19.5 L13,4.5 L22.5,19.5"/><ellipse cx="13" cy="20" rx="9.5" ry="3.5"/></g></svg>
<svg class="r" style="left:1197px;top:45px;" width="26" height="26" viewBox="0 0 26 26"><g fill="none" stroke="#303030" stroke-width="1.8" stroke-linejoin="round"><path d="M5,7.5 L12.8,2.5 L20.5,7.5 V22.5 H5 Z"/><path d="M12.8,2.5 V16 M5,22.5 L12.8,16 L20.5,22.5"/></g></svg>
<svg class="r" style="left:1238px;top:45px;" width="26" height="26" viewBox="0 0 26 26"><g fill="none" stroke="#303030" stroke-width="1.8" stroke-linejoin="round"><path d="M8,2.5 H18 L21.5,7 V19 L18,23.5 H8 L4.5,19 V7 Z"/><path d="M8,7 H18 M8,2.5 V7 M18,2.5 V7 M4.5,7 L8,7 M9.5,23 V17 H16.5 V23 M4.5,19 L9.5,17 M21.5,19 L16.5,17 M10.2,7 V17 M15.8,7 V17"/></g></svg>
<svg class="r" style="left:1280px;top:44px;" width="28" height="28" viewBox="0 0 28 28"><g fill="none" stroke="#787878" stroke-width="1.6" stroke-linejoin="round"><path d="M2,9 L9,5 L16,9 V16.5 L9,20.5 L2,16.5 Z M2,9 L9,13 L16,9 M9,13 V20.5"/><circle cx="18" cy="19.5" r="6" stroke-dasharray="2,1.8"/><path d="M18,2 L23,6.5 M23,2.5 V6.5 H19"/></g></svg>
<svg class="r" style="left:1320px;top:45px;" width="28" height="27" viewBox="0 0 28 27"><g fill="none" stroke="#787878" stroke-width="1.6" stroke-linejoin="round"><path d="M2,12 L8,8.5 L14,11.5 V17.5 L8,21 L2,17.5 Z M2,12 L8,15 L14,11.5 M8,15 V21"/><path d="M8,8.5 L19,3 L25.5,6.5 V12.5 L14,17.5 M14,11.5 L25.5,6.5 M19,3 L19.5,9"/><path d="M17,24.5 L23,19.5 M19.5,19.5 H23 V23"/></g></svg>
<svg class="r" style="left:1364px;top:45px;" width="25" height="26" viewBox="0 0 25 26"><g fill="none" stroke="#787878" stroke-width="1.8" stroke-linejoin="round"><path d="M2.2,8.8 Q12.4,-1.5 22.6,8.8 V20.6 L17.3,24.2 V12.8 L12.4,8.8 H2.2 V19.6 H12.4 V8.8"/><path d="M17.3,12.8 Q20.5,11.5 22.6,8.8"/><path d="M6,19.2 Q6.3,24 11.5,24"/></g><path d="M6.2,17.5 V12.2 M3.8,14.6 L6.2,12.2 L8.6,14.6" fill="none" stroke="#787878" stroke-width="1.7"/></svg>
<svg class="r" style="left:1404px;top:45px;" width="26" height="26" viewBox="0 0 26 26"><g fill="none" stroke="#787878" stroke-width="1.6"><circle cx="7.5" cy="7.8" r="3"/><circle cx="18.2" cy="7.8" r="3"/><circle cx="18.2" cy="18.7" r="3"/></g><circle cx="7.5" cy="18.7" r="3.8" fill="#787878"/></svg>
<svg class="r" style="left:1445px;top:44px;" width="26" height="26" viewBox="0 0 26 26"><g fill="none" stroke="#787878" stroke-width="1.6"><circle cx="12.9" cy="6.9" r="3"/><circle cx="5.8" cy="12.6" r="3"/><circle cx="20.2" cy="12.6" r="3"/><circle cx="17.6" cy="21.5" r="3"/></g><circle cx="8.4" cy="21.5" r="3.8" fill="#787878"/></svg>
<div class="r" style="left:1482px;top:42px;width:1px;height:31px;background:#dcdcdc;"></div>
<svg class="r" style="left:1496px;top:45px;" width="26" height="26" viewBox="0 0 26 26"><g fill="none" stroke="#a8a8a8" stroke-width="1.8"><path d="M11.9,2.3 V22.7"/><path d="M2.2,12.5 Q4,20.8 11.9,20.5 Q20.8,20 21.6,13.5 Q22,9.5 16.5,6.8"/><path d="M18.3,3.6 L15.6,6.6 L18.8,9"/></g></svg>
<div class="r" style="left:1530px;top:39px;width:40px;height:40px;background:#c8d8ee;"></div>
<svg class="r" style="left:1538px;top:48px;" width="21" height="21" viewBox="0 0 21 21"><g stroke="#303030" stroke-width="1.7" stroke-linecap="round"><path d="M4.8,1.3 V19.3 M10.9,1.3 V19.3 M16.9,1.3 V19.3 M1.5,4.2 H20 M1.5,10.3 H20 M1.5,16.4 H20"/></g></svg>
<svg class="r" style="left:1578px;top:45px;" width="28" height="28" viewBox="0 0 28 28"><circle cx="12.4" cy="11.9" r="8.3" fill="none" stroke="#303030" stroke-width="1.9"/><path d="M8.4,11.9 H16.4" stroke="#303030" stroke-width="1.9"/><path d="M18.5,18 L24.5,24" stroke="#303030" stroke-width="2"/></svg>
<svg class="r" style="left:1618px;top:44px;" width="28" height="28" viewBox="0 0 28 28"><circle cx="12.2" cy="12.1" r="8.3" fill="none" stroke="#303030" stroke-width="1.9"/><path d="M8,12.1 H16.4 M12.2,8 V16.2" stroke="#303030" stroke-width="1.9"/><path d="M18.4,18.2 L24.3,24.5" stroke="#303030" stroke-width="2"/></svg>
<svg class="r" style="left:1659px;top:45px;" width="28" height="28" viewBox="0 0 28 28"><circle cx="12.3" cy="12" r="8.3" fill="none" stroke="#303030" stroke-width="1.9"/><path d="M18.5,18.2 L24.5,24.5" stroke="#303030" stroke-width="2"/><path d="M12.3,8 L15.8,10 V14 L12.3,16 L8.8,14 V10 Z M8.8,10 L12.3,12 L15.8,10 M12.3,12 V16" fill="none" stroke="#303030" stroke-width="1.5"/></svg>
<svg class="r" style="left:1703px;top:45px;" width="23" height="27" viewBox="0 0 23 27"><path d="M2.2,9.2 L2.8,2.5 L10.5,3 L19.4,9.2 V19.2 L10.7,24.8 L2.2,19.5 Z" fill="#303030" stroke="#303030" stroke-width="1.2" stroke-linejoin="round"/><g fill="#fff"><path d="M4,9.5 L6.6,8.1 L12.75,11.3 L10.4,13 Z"/><path d="M10.1,4.6 L12.2,3.7 L17.7,7.5 L15.7,9 Z"/><path d="M3.6,13.6 L12.6,17.6 V22.6 L3.6,18.8 Z"/><path d="M16,13.9 L17.4,13 V17.1 L16,18 Z"/></g></svg>
<svg class="r" style="left:1742px;top:45px;" width="28" height="27" viewBox="0 0 28 27"><g fill="none" stroke="#787878" stroke-width="1.5" stroke-linejoin="round"><path d="M2.3,13 L7.5,9.8 L12,12.5 V21.5 L7.8,24.8 L2.3,21.5 Z"/><path d="M5.2,11.2 L10.4,8 L14.9,10.7 V19.7 L10.7,23 L5.2,19.7"/><path d="M8.1,9.4 L13.3,6.2 L17.8,8.9 V17.9 L13.6,21.2"/><path d="M12.3,6.3 L19.3,1.6 L26.4,6.3 V13.9 L19.3,17.9 L16,16.2 M12.3,6.3 L19.3,11 L26.4,6.3 M19.3,11 V17.9"/><path d="M3.8,8 L9,4 M6,3.6 H9.2 V6.8"/></g></svg>
<svg class="r" style="left:1784px;top:45px;" width="26" height="27" viewBox="0 0 26 27"><path d="M2.9,19.5 V8.6 Q12.9,-1.2 22.8,7.6 V20.6 L20.4,22.6 L12.4,19.5 Z" fill="#787878"/><rect x="4.8" y="9.8" width="7.3" height="7.3" fill="#fff"/><path d="M8.4,17.5 V12 M5.9,14.5 L8.4,12 L10.9,14.5" stroke="#787878" stroke-width="1.7" fill="none"/><path d="M8.4,17.5 Q8.6,22.6 14,22.4" stroke="#787878" stroke-width="1.7" fill="none"/><path d="M6,6.4 L6.6,7.6 M9.4,4.6 L9.7,6 M13,4 V5.6 M16.6,4.6 L16.2,6 M20,6.2 L19.3,7.5 M21,11 L19.8,11.6" stroke="#fff" stroke-width="1"/></svg>
<div class="r" style="left:1820px;top:42px;width:2px;height:32px;background:#cfcfcf;"></div>
<svg class="r" style="left:1832px;top:45px;" width="30" height="28" viewBox="0 0 30 28"><path d="M6,1.5 H18.5 L24,7 V23.5 a2,2 0 0 1 -2,2 H8 a2,2 0 0 1 -2,-2 Z" fill="#fff" stroke="#222" stroke-width="1.6"/><path d="M18.5,1.5 V7 H24" fill="none" stroke="#222" stroke-width="1.4"/><rect x="2.7" y="10.7" width="24" height="11" rx="1.5" fill="#e8141c"/><text x="14.7" y="20" font-family="Liberation Sans" font-weight="700" font-size="9.5" fill="#fff" text-anchor="middle">DXF</text></svg>
<svg class="r" style="left:1907px;top:55.5px;" width="10" height="8" viewBox="0 0 10 8"><path d="M1.8,1.6 L4.6,4.2 L1.8,6.8 M5.4,1.6 L8.2,4.2 L5.4,6.8" fill="none" stroke="#2a2a2a" stroke-width="1.3"/></svg>
<div class="r" style="left:1668px;top:80px;width:250px;height:32px;background:#f3f2f8;"></div>
<div class="t" style="left:1571.70px;top:89.53px;font-size:14px;font-weight:700;color:#222;letter-spacing:-0.352px;">ANALYSIS</div>
<div class="t" style="left:1690.90px;top:89.53px;font-size:14px;font-weight:700;color:#75756a;letter-spacing:-0.261px;">MATERIALS</div>
<div class="t" style="left:1821.20px;top:89.53px;font-size:14px;font-weight:700;color:#75756a;letter-spacing:-0.910px;">FEATURES</div>
<div class="r" style="left:1549px;top:148px;width:365px;height:29px;background:#c8d8ee;"></div>
<div class="r" style="left:1753px;top:118px;width:161px;height:29px;background:#f2f2f2;"></div>
<div class="r" style="left:1753px;top:178px;width:161px;height:29px;background:#f2f2f2;"></div>
<svg class="r" style="left:1554px;top:122px;" width="20" height="20" viewBox="0 0 20 20"><rect x="1.8" y="1.8" width="16" height="16" rx="2.5" fill="none" stroke="#888" stroke-width="1.5"/><path d="M5.3,10 H13.5" stroke="#7b5cf5" stroke-width="1.9"/><path d="M10,6.5 L14,10 L10,13.5" fill="none" stroke="#7b5cf5" stroke-width="1.9"/></svg>
<svg class="r" style="left:1591px;top:122px;" width="22" height="22" viewBox="0 0 22 22"><rect x="2" y="1.6" width="18.4" height="17.6" rx="2.8" fill="#fff" stroke="#303030" stroke-width="1.9"/><text x="5" y="14.4" font-family="Liberation Sans" font-weight="700" font-size="11.5" fill="#303030" textLength="11.8" lengthAdjust="spacingAndGlyphs">2D</text></svg>
<div class="t" style="left:1619.20px;top:124.73px;font-size:15px;font-weight:400;color:#1e1e1e;letter-spacing:0.077px;">2D Model</div>
<svg class="r" style="left:1554px;top:152px;" width="20" height="20" viewBox="0 0 20 20"><rect x="1.8" y="1.8" width="16" height="16" rx="2.5" fill="none" stroke="#888" stroke-width="1.5"/><path d="M5.3,10 H13.5" stroke="#7b5cf5" stroke-width="1.9"/><path d="M10,6.5 L14,10 L10,13.5" fill="none" stroke="#7b5cf5" stroke-width="1.9"/></svg>
<svg class="r" style="left:1591px;top:150px;" width="22" height="24" viewBox="0 0 22 24"><polygon points="11.8,1.8 21,7 21,17.2 11.8,22.3 2.6,17.2 2.6,7" fill="none" stroke="#303030" stroke-width="1.9" stroke-linejoin="round"/><text x="6" y="17" font-family="Liberation Sans" font-weight="700" font-size="11.5" fill="#303030" textLength="11.8" lengthAdjust="spacingAndGlyphs">3D</text></svg>
<div class="t" style="left:1619.20px;top:154.73px;font-size:15px;font-weight:400;color:#1e1e1e;letter-spacing:-0.950px;">3D SSI</div>
<svg class="r" style="left:1554px;top:182px;" width="20" height="20" viewBox="0 0 20 20"><rect x="1.8" y="1.8" width="16" height="16" rx="2.5" fill="#80ec1c" stroke="#888" stroke-width="1.5"/><path d="M5,9.5 L8.8,13 L14.8,7" fill="none" stroke="#7b5cf5" stroke-width="1.9"/></svg>
<svg class="r" style="left:1591px;top:182px;" width="22" height="22" viewBox="0 0 22 22"><rect x="2" y="1.6" width="18.4" height="17.6" rx="2.8" fill="#fff" stroke="#303030" stroke-width="1.9"/><text x="5" y="14.4" font-family="Liberation Sans" font-weight="700" font-size="11.5" fill="#303030" textLength="11.8" lengthAdjust="spacingAndGlyphs">2D</text></svg>
<div class="t" style="left:1618.20px;top:184.73px;font-size:15px;font-weight:400;color:#1e1e1e;letter-spacing:0.202px;">Footing</div>
<div class="t" style="left:1756.80px;top:124.73px;font-size:15px;font-weight:400;color:#1e1e1e;letter-spacing:0.244px;">Deformation</div>
<svg class="r" style="left:1895px;top:129.8px;" width="15" height="8" viewBox="0 0 15 8"><path d="M1,1 H14 L7.5,7 Z" fill="#7e8878"/></svg>
<div class="t" style="left:1756.80px;top:154.73px;font-size:15px;font-weight:400;color:#1e1e1e;letter-spacing:0.244px;">Deformation</div>
<svg class="r" style="left:1895px;top:159.8px;" width="15" height="8" viewBox="0 0 15 8"><path d="M1,1 H14 L7.5,7 Z" fill="#7e8878"/></svg>
<div class="t" style="left:1756.80px;top:184.73px;font-size:15px;font-weight:400;color:#1e1e1e;letter-spacing:0.244px;">Deformation</div>
<svg class="r" style="left:1895px;top:189.8px;" width="15" height="8" viewBox="0 0 15 8"><path d="M1,1 H14 L7.5,7 Z" fill="#7e8878"/></svg>
<div class="r" style="left:1549px;top:516px;width:365px;height:1px;background:#d8d8d8;"></div>
<svg class="r" style="left:1566px;top:518px;" width="28" height="28" viewBox="0 0 28 28"><path d="M20,2.5 V11 M15.8,6.8 H24.2" stroke="#303030" stroke-width="1.9"/><path d="M12,7 H4.5 a2,2 0 0 0 -2,2 V21.5 a2,2 0 0 0 2,2 H17.5 a2,2 0 0 0 2,-2 V16" fill="none" stroke="#303030" stroke-width="1.9"/><text x="5.7" y="19" font-family="Liberation Sans" font-weight="700" font-size="10.5" fill="#303030" textLength="11.2" lengthAdjust="spacingAndGlyphs">2D</text></svg>
<svg class="r" style="left:1626px;top:518px;" width="28" height="28" viewBox="0 0 28 28"><path d="M20.2,2.5 V11 M16,6.8 H24.4" stroke="#303030" stroke-width="1.9"/><path d="M13.5,4.5 L11.3,3.5 L2.8,8.3 V18.8 L11.3,23.5 L19.7,18.8 V15" fill="none" stroke="#303030" stroke-width="1.9" stroke-linejoin="round"/><text x="5.7" y="17.5" font-family="Liberation Sans" font-weight="700" font-size="10.5" fill="#303030" textLength="11.6" lengthAdjust="spacingAndGlyphs">3D</text></svg>
<svg class="r" style="left:1688px;top:518px;" width="28" height="28" viewBox="0 0 28 28"><path d="M18.4,3 V10.5 M14.6,6.8 H22.2" stroke="#303030" stroke-width="1.9"/><path d="M10,9 L16.8,15.8 L10,22.5 L3.2,15.8 Z" fill="none" stroke="#303030" stroke-width="1.9" stroke-linejoin="round"/></svg>
<svg class="r" style="left:1750px;top:518px;" width="26" height="26" viewBox="0 0 26 26"><rect x="4.2" y="4.4" width="12.5" height="12.5" rx="2.2" fill="none" stroke="#303030" stroke-width="1.9"/><rect x="9.5" y="9.7" width="12.5" height="12.5" rx="2.2" fill="#fff" stroke="#303030" stroke-width="1.9"/></svg>
<svg class="r" style="left:1811px;top:518px;" width="24" height="26" viewBox="0 0 24 26"><path d="M3,7 H20.5" stroke="#303030" stroke-width="1.9"/><path d="M9.2,6.5 V5.5 a2,2 0 0 1 4,0 V6.5" fill="none" stroke="#303030" stroke-width="1.7"/><path d="M4.5,7.2 L5.4,20 a2.5,2.5 0 0 0 2.5,2.5 h7.6 a2.5,2.5 0 0 0 2.5,-2.5 L19,7.2" fill="none" stroke="#303030" stroke-width="1.9"/><path d="M9.5,11.2 V18.5 M14,11.2 V18.5" stroke="#303030" stroke-width="1.7"/></svg>
<svg class="r" style="left:1871px;top:518px;" width="26" height="26" viewBox="0 0 26 26"><rect x="3.2" y="4.4" width="18.8" height="18.3" rx="2.6" fill="none" stroke="#303030" stroke-width="2"/><path d="M8.2,8.6 L17.6,13.5 L8.2,18.5 Z" fill="#303030" stroke="#303030" stroke-width="1" stroke-linejoin="round"/></svg>
<div class="r" style="left:1543px;top:547px;width:375px;height:4px;background:#e3e3e3;"></div>
<div class="r" style="left:1730px;top:551px;width:188px;height:33px;background:#f3f2f8;"></div>
<div class="t" style="left:1595.00px;top:560.63px;font-size:14px;font-weight:700;color:#222;letter-spacing:-0.811px;">PROPERTIES</div>
<div class="r" style="left:1549px;top:584px;width:365px;height:24.5px;background:#d1d1d1;"></div>
<div class="t" style="left:1556.40px;top:588.75px;font-size:14.7px;font-weight:700;color:#222;letter-spacing:-0.067px;">Settings</div>
<div class="t" style="left:1555.20px;top:618.81px;font-size:14.8px;font-weight:400;color:#1e1e1e;letter-spacing:-0.095px;">Element Type</div>
<div class="r" style="left:1735px;top:612.6px;width:178px;height:26px;background:#f3f3f3;border:1px solid #cfcfcf"></div>
<svg class="r" style="left:1893.5px;top:622px;" width="15" height="8" viewBox="0 0 15 8"><path d="M1,1 H14 L7.5,7 Z" fill="#7e8878"/></svg>
<div class="t" style="left:1739.40px;top:618.81px;font-size:14.8px;font-weight:400;color:#1e1e1e;letter-spacing:0.390px;">Mixed</div>
<div class="t" style="left:1556.20px;top:647.21px;font-size:14.8px;font-weight:400;color:#1e1e1e;letter-spacing:-0.096px;">Analysis type</div>
<div class="r" style="left:1735px;top:641.0px;width:178px;height:26px;background:#f3f3f3;border:1px solid #cfcfcf"></div>
<svg class="r" style="left:1893.5px;top:651px;" width="15" height="8" viewBox="0 0 15 8"><path d="M1,1 H14 L7.5,7 Z" fill="#7e8878"/></svg>
<div class="t" style="left:1739.40px;top:647.21px;font-size:14.8px;font-weight:400;color:#1e1e1e;letter-spacing:-0.156px;">Elastoplastic</div>
<div class="r" style="left:1549px;top:671.5px;width:365px;height:24.5px;background:#d1d1d1;"></div>
<div class="t" style="left:1556.40px;top:676.25px;font-size:14.7px;font-weight:700;color:#222;letter-spacing:-0.024px;">Mesh</div>
<div class="t" style="left:1555.20px;top:706.21px;font-size:14.8px;font-weight:400;color:#1e1e1e;letter-spacing:0.182px;">Mesh</div>
<div class="r" style="left:1735px;top:700.0px;width:178px;height:26px;background:#f3f3f3;border:1px solid #cfcfcf"></div>
<svg class="r" style="left:1893.5px;top:710px;" width="15" height="8" viewBox="0 0 15 8"><path d="M1,1 H14 L7.5,7 Z" fill="#7e8878"/></svg>
<div class="t" style="left:1739.40px;top:706.21px;font-size:14.8px;font-weight:400;color:#1e1e1e;letter-spacing:-0.371px;">User</div>
<div class="t" style="left:1555.20px;top:734.81px;font-size:14.8px;font-weight:400;color:#1e1e1e;letter-spacing:0.088px;">No of Elements</div>
<div class="t" style="left:1736.90px;top:734.81px;font-size:14.8px;font-weight:400;color:#1e1e1e;letter-spacing:0.004px;">1000</div>
<div class="t" style="left:1555.20px;top:762.21px;font-size:14.8px;font-weight:400;color:#1e1e1e;letter-spacing:0.190px;">Mesh Adaptivity</div>
<div class="r" style="left:1735px;top:756.0px;width:178px;height:26px;background:#f3f3f3;border:1px solid #cfcfcf"></div>
<svg class="r" style="left:1893.5px;top:766px;" width="15" height="8" viewBox="0 0 15 8"><path d="M1,1 H14 L7.5,7 Z" fill="#7e8878"/></svg>
<div class="t" style="left:1739.40px;top:762.21px;font-size:14.8px;font-weight:400;color:#1e1e1e;">No</div>
<div class="r" style="left:1549px;top:787.5px;width:365px;height:23.5px;background:#d1d1d1;"></div>
<div class="t" style="left:1556.40px;top:791.75px;font-size:14.7px;font-weight:700;color:#222;letter-spacing:0.085px;">Initial Conditions</div>
<div class="t" style="left:1555.20px;top:821.21px;font-size:14.8px;font-weight:400;color:#1e1e1e;letter-spacing:0.235px;">From</div>
<div class="r" style="left:1735px;top:815.0px;width:178px;height:26px;background:#f3f3f3;border:1px solid #cfcfcf"></div>
<svg class="r" style="left:1893.5px;top:825px;" width="15" height="8" viewBox="0 0 15 8"><path d="M1,1 H14 L7.5,7 Z" fill="#7e8878"/></svg>
<div class="t" style="left:1739.40px;top:821.21px;font-size:14.8px;font-weight:400;color:#1e1e1e;letter-spacing:0.519px;">None</div>
<div class="t" style="left:1555.20px;top:850.21px;font-size:14.8px;font-weight:400;color:#1e1e1e;letter-spacing:-0.076px;">Initial stresses</div>
<div class="r" style="left:1735px;top:844.0px;width:178px;height:26px;background:#f3f3f3;border:1px solid #cfcfcf"></div>
<svg class="r" style="left:1893.5px;top:854px;" width="15" height="8" viewBox="0 0 15 8"><path d="M1,1 H14 L7.5,7 Z" fill="#7e8878"/></svg>
<div class="t" style="left:1740.40px;top:850.21px;font-size:14.8px;font-weight:400;color:#1e1e1e;letter-spacing:0.126px;">Automatic</div>
<div class="r" style="left:1549px;top:874px;width:365px;height:24.5px;background:#d1d1d1;"></div>
<div class="t" style="left:1556.40px;top:878.75px;font-size:14.7px;font-weight:700;color:#222;letter-spacing:-0.303px;">Safety</div>
<div class="t" style="left:1555.20px;top:908.71px;font-size:14.8px;font-weight:400;color:#1e1e1e;letter-spacing:0.108px;">Design Approach</div>
<div class="r" style="left:1735px;top:902.5px;width:178px;height:26px;background:#f3f3f3;border:1px solid #cfcfcf"></div>
<svg class="r" style="left:1893.5px;top:912px;" width="15" height="8" viewBox="0 0 15 8"><path d="M1,1 H14 L7.5,7 Z" fill="#7e8878"/></svg>
<div class="t" style="left:1739.40px;top:908.71px;font-size:14.8px;font-weight:400;color:#1e1e1e;letter-spacing:0.197px;">Unity</div>
<div class="r" style="left:1549px;top:932.5px;width:365px;height:24.5px;background:#d1d1d1;"></div>
<div class="t" style="left:1556.40px;top:937.25px;font-size:14.7px;font-weight:700;color:#222;letter-spacing:0.285px;">Time</div>
<div class="t" style="left:1556.20px;top:967.21px;font-size:14.8px;font-weight:400;color:#1e1e1e;letter-spacing:-0.174px;">Time Scope</div>
<div class="r" style="left:1735px;top:961.0px;width:178px;height:26px;background:#f3f3f3;border:1px solid #cfcfcf"></div>
<svg class="r" style="left:1893.5px;top:971px;" width="15" height="8" viewBox="0 0 15 8"><path d="M1,1 H14 L7.5,7 Z" fill="#7e8878"/></svg>
<div class="t" style="left:1739.40px;top:967.21px;font-size:14.8px;font-weight:400;color:#1e1e1e;letter-spacing:0.015px;">Long Term</div>
<div class="t" style="left:370.00px;top:996.41px;font-size:14.8px;font-weight:400;color:#1e1e1e;letter-spacing:-0.150px;">Snapping</div>
<div class="t" style="left:462.80px;top:996.41px;font-size:14.8px;font-weight:700;color:#6d6d60;letter-spacing:-1.636px;text-decoration:underline;text-underline-offset:2px;">ABS</div>
<div class="t" style="left:496.30px;top:996.41px;font-size:14.8px;font-weight:400;color:#333;">/</div>
<div class="t" style="left:505.60px;top:996.41px;font-size:14.8px;font-weight:400;color:#8a8a8a;letter-spacing:-2.878px;">REL</div>
<div class="t" style="left:547.75px;top:996.41px;font-size:14.8px;font-weight:400;color:#8a8a8a;letter-spacing:-0.807px;">POLAR</div>
<div class="t" style="left:740.90px;top:996.41px;font-size:14.8px;font-weight:400;color:#1e1e1e;letter-spacing:-0.086px;">Selection:</div>
<div class="t" style="left:816.60px;top:996.41px;font-size:14.8px;font-weight:400;color:#1e1e1e;letter-spacing:-0.111px;">voids</div>
<svg class="r" style="left:854.5px;top:995px;" width="17" height="17" viewBox="0 0 17 17"><rect x="1" y="1" width="15" height="15" rx="2" fill="#fff" stroke="#7a7a7a" stroke-width="1.4"/></svg>
<div class="t" style="left:883.00px;top:996.41px;font-size:14.8px;font-weight:400;color:#1e1e1e;letter-spacing:-0.017px;">points</div>
<svg class="r" style="left:927px;top:995px;" width="17" height="17" viewBox="0 0 17 17"><rect x="1" y="1" width="15" height="15" rx="2" fill="#fff" stroke="#7a7a7a" stroke-width="1.4"/><path d="M4,8.5 L7.3,11.8 L13,5" fill="none" stroke="#7a5ff5" stroke-width="1.6"/></svg>
<div class="t" style="left:954.20px;top:996.41px;font-size:14.8px;font-weight:400;color:#1e1e1e;letter-spacing:-0.008px;">lines</div>
<svg class="r" style="left:988.5px;top:995px;" width="17" height="17" viewBox="0 0 17 17"><rect x="1" y="1" width="15" height="15" rx="2" fill="#fff" stroke="#7a7a7a" stroke-width="1.4"/><path d="M4,8.5 L7.3,11.8 L13,5" fill="none" stroke="#7a5ff5" stroke-width="1.6"/></svg>
<div class="t" style="left:1016.50px;top:996.41px;font-size:14.8px;font-weight:400;color:#1e1e1e;letter-spacing:-0.592px;">faces</div>
<svg class="r" style="left:1053.2px;top:995px;" width="17" height="17" viewBox="0 0 17 17"><rect x="1" y="1" width="15" height="15" rx="2" fill="#fff" stroke="#7a7a7a" stroke-width="1.4"/><path d="M4,8.5 L7.3,11.8 L13,5" fill="none" stroke="#7a5ff5" stroke-width="1.6"/></svg>
<div class="t" style="left:1082.00px;top:996.41px;font-size:14.8px;font-weight:400;color:#1e1e1e;letter-spacing:-0.067px;">volumes</div>
<svg class="r" style="left:1140.7px;top:995px;" width="17" height="17" viewBox="0 0 17 17"><rect x="1" y="1" width="15" height="15" rx="2" fill="#fff" stroke="#7a7a7a" stroke-width="1.4"/><path d="M4,8.5 L7.3,11.8 L13,5" fill="none" stroke="#7a5ff5" stroke-width="1.6"/></svg>
<div class="t" style="left:1438.90px;top:996.41px;font-size:14.8px;font-weight:400;color:#222;letter-spacing:-0.307px;font-style:italic;">(no selection)</div>
</body></html>
